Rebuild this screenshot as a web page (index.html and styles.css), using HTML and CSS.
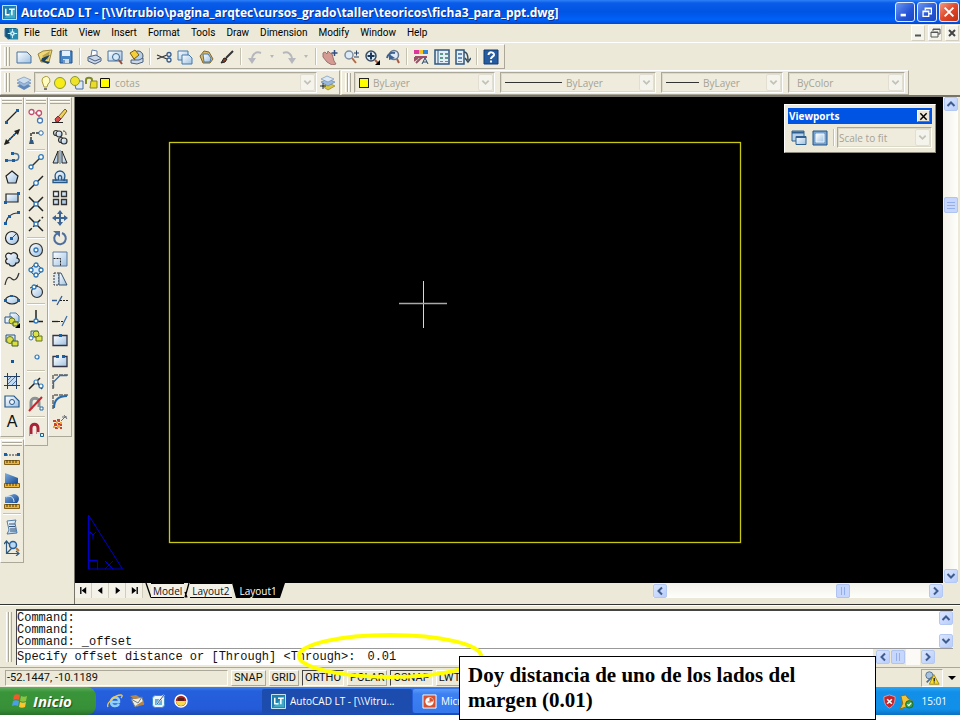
FILE: index.html
```
<!DOCTYPE html>
<html lang="en">
<head>
<meta charset="utf-8">
<title>AutoCAD LT - ficha3_para_ppt.dwg</title>
<link rel="stylesheet" href="styles.css">
</head>
<body>
<svg class="defs" aria-hidden="true">
  <defs>
    <linearGradient id="sheet" x1="0" y1="0" x2="1" y2="1"><stop offset="0" stop-color="#fff"/><stop offset="1" stop-color="#9cc0e2"/></linearGradient>
    <linearGradient id="steel" x1="0" y1="0" x2="1" y2="1"><stop offset="0" stop-color="#7fb0e0"/><stop offset="1" stop-color="#14448c"/></linearGradient>
  </defs>
  <symbol id="down" viewBox="0 0 10 10"><path d="M1.500 3L5 6.500L8.500 3" fill="none" stroke="currentColor" stroke-width="2"/></symbol>
  <symbol id="up" viewBox="0 0 10 10"><path d="M1.500 7L5 3.500L8.500 7" fill="none" stroke="currentColor" stroke-width="2"/></symbol>
  <symbol id="left" viewBox="0 0 10 10"><path d="M7 1.500L3.500 5L7 8.500" fill="none" stroke="currentColor" stroke-width="2"/></symbol>
  <symbol id="right" viewBox="0 0 10 10"><path d="M3 1.500L6.500 5L3 8.500" fill="none" stroke="currentColor" stroke-width="2"/></symbol>
  <symbol id="lt" viewBox="0 0 16 16"><path d="M.5 .5h15v15H.5z" fill="#1e7fae" stroke="#d8f0f8"/><path d="M2 14L14 2v12z" fill="#3fa9c8"/><path d="M4 4v6.500h4M7.500 4.500h6M10.500 4.500V11" fill="none" stroke="#fff" stroke-width="1.600"/></symbol>
</svg>

<header class="titlebar">
  <svg class="app-icon"><use href="#lt"/></svg>
  <h1>AutoCAD LT - [\\Vitrubio\pagina_arqtec\cursos_grado\taller\teoricos\ficha3_para_ppt.dwg]</h1>
  <div class="window-buttons">
    <button aria-label="Minimize"><svg viewBox="0 0 16 16"><path d="M3 11.500h6" stroke="#fff" stroke-width="3"/></svg></button>
    <button aria-label="Restore"><svg viewBox="0 0 16 16"><path d="M6 6V3.500h7V10h-2.500M3.500 7h6.500v6H3.500zM3 7.500h7M6 4h7" fill="none" stroke="#fff" stroke-width="1.500"/></svg></button>
    <button class="close" aria-label="Close"><svg viewBox="0 0 16 16"><path d="M3 3l10 10M13 3L3 13" stroke="#fff" stroke-width="2.200"/></svg></button>
  </div>
</header>

<nav class="menubar">
  <svg class="menu-logo" viewBox="0 0 16 16"><path d="M1 2h12l2 3v9H4l-3-3z" fill="#12567c"/><path d="M5 3h10v11H7z" fill="#258bb0"/><path d="M9 3v10M4 8h10" stroke="#d8f6ff"/><rect x="7.500" y="6.500" width="3" height="3" fill="#258bb0" stroke="#fff"/><path d="M1 3v8l4 3" fill="none" stroke="#4a7cb8"/></svg>
  <button>File</button><button>Edit</button><button>View</button><button>Insert</button><button>Format</button><button>Tools</button><button>Draw</button><button>Dimension</button><button>Modify</button><button>Window</button><button>Help</button>
  <div class="doc-buttons">
    <button aria-label="Minimize drawing"><svg viewBox="0 0 12 12"><path d="M3 8.500h6" stroke="#555" stroke-width="2"/></svg></button>
    <button aria-label="Restore drawing"><svg viewBox="0 0 12 12"><path d="M4 4V2h7v5H9M4 2.500h7M2 5h7v5H2zM2 5.500h7" fill="none" stroke="#555"/></svg></button>
    <button aria-label="Close drawing"><svg viewBox="0 0 12 12"><path d="M3 3l6 6M9 3L3 9" stroke="#444" stroke-width="2"/></svg></button>
  </div>
</nav>

<div class="dock-row">
  <div class="toolbar standard">
    <span class="grip"></span>
    <button aria-label="New"><svg viewBox="0 0 16 16"><path d="M1 3h10l4 4v7H1z" fill="url(#sheet)" stroke="#46719e"/></svg></button>
    <button aria-label="Open"><svg viewBox="0 0 16 16"><path d="M1 5l5-3 9-1-3 12H4z" fill="#f0d878" stroke="#9a8338"/><path d="M5 7l8-5-2 9z" fill="#b9a24e"/><path d="M5 9l8-3-5 6 5 1-2 2-7-3z" fill="#1c4260"/></svg></button>
    <button aria-label="Save"><svg viewBox="0 0 16 16"><path d="M2 2h12v12H2z" fill="#4b86c4" stroke="#244f8c"/><path d="M4 2h8v5H4z" fill="#e6f0fa"/><path d="M5 10h6v4H5z" fill="#c9dff0"/><path d="M6 11v3" stroke="#244f8c"/></svg></button>
    <span class="sep"></span>
    <button aria-label="Plot"><svg viewBox="0 0 16 16"><path d="M5 7L6 1l5 1v5" fill="#fff" stroke="#6080a8"/><path d="M2 8l8-2 5 3v3l-6 3-7-3z" fill="#cbd8e8" stroke="#4b5f80"/><path d="M3 9l6 3 5-2" fill="none" stroke="#4b5f80"/></svg></button>
    <button aria-label="Preview"><svg viewBox="0 0 16 16"><path d="M1 2h14v10H1z" fill="url(#sheet)" stroke="#46719e"/><circle cx="9" cy="8" r="3.500" fill="#d7eaf8" stroke="#36648f"/><path d="M12 11l3 4" stroke="#9b4d39" stroke-width="2"/></svg></button>
    <button aria-label="Publish"><svg viewBox="0 0 16 16"><circle cx="10" cy="7" r="5" fill="#b8cfe8" stroke="#456"/><path d="M2 4l5-3 4 5-5 4z" fill="#f4cf35" stroke="#7a5d10"/><path d="M3 11l8 0 4-2v4l-6 2-6-1z" fill="#ccd9e8" stroke="#4a5e7c"/></svg></button>
    <span class="sep"></span>
    <button aria-label="Cut"><svg viewBox="0 0 16 16"><path d="M1 6l10 4M1 10l10-4" stroke="#333" stroke-width="1.300"/><circle cx="13" cy="5.500" r="2" fill="none" stroke="#385f90" stroke-width="1.300"/><circle cx="13" cy="11" r="2" fill="none" stroke="#385f90" stroke-width="1.300"/></svg></button>
    <button aria-label="Copy"><svg viewBox="0 0 16 16"><path d="M1 2h10v9H1z" fill="url(#sheet)" stroke="#4579ac"/><path d="M5 6h7l3 3v6H5z" fill="url(#sheet)" stroke="#4579ac"/></svg></button>
    <button aria-label="Paste"><svg viewBox="0 0 16 16"><path d="M2 7l4-5 5 1 4 7-3 4H5z" fill="#d9b968" stroke="#806528"/><path d="M5 5h5l3 4-1 4H6z" fill="url(#sheet)" stroke="#4579ac"/></svg></button>
    <button aria-label="Match properties"><svg viewBox="0 0 16 16"><path d="M14 2L7 9" stroke="#333" stroke-width="2"/><path d="M2 14l3-5 3 1-2 3z" fill="#8b3c22" stroke="#222"/></svg></button>
    <span class="sep"></span>
    <button aria-label="Undo" disabled><svg viewBox="0 0 16 16"><path d="M14 4C9 2 5 5 5 11" fill="none" stroke="#b5b7bc" stroke-width="2"/><path d="M1 9h8l-4 6z" fill="#b5b7bc"/></svg></button>
    <button class="drop" aria-label="Undo list" disabled></button>
    <button aria-label="Redo" disabled><svg viewBox="0 0 16 16"><path d="M2 4c5-2 9 1 9 7" fill="none" stroke="#b5b7bc" stroke-width="2"/><path d="M7 9h8l-4 6z" fill="#b5b7bc"/></svg></button>
    <button class="drop" aria-label="Redo list" disabled></button>
    <span class="sep"></span>
    <button aria-label="Pan"><svg viewBox="0 0 16 16"><path d="M1 4l2-1 2 2 1-3 2 2 2 1 2 7 2 3-4 1-5-3-4-5z" fill="#d59b93" stroke="#9c7270"/><path d="M12.500 1v6M9.500 4h6" stroke="#314f7e" stroke-width="1.500"/></svg></button>
    <button aria-label="Zoom realtime"><svg viewBox="0 0 16 16"><circle cx="6" cy="6" r="4" fill="#dcebf6" stroke="#7d8da0" stroke-width="1.500"/><path d="M9 9l4 5" stroke="#b26a48" stroke-width="2"/><path d="M11 4h5M13.500 1.500v5M11 8h5" stroke="#273f60"/></svg></button>
    <button aria-label="Zoom window"><svg viewBox="0 0 16 16"><circle cx="7" cy="7" r="5" fill="#dcebf6" stroke="#3a4c61" stroke-width="1.500"/><path d="M7 3.500v7M3.500 7h7" stroke="#1c3858" stroke-width="2"/><path d="M11 11l3 3" stroke="#a55c45" stroke-width="2"/><path d="M16 11v5h-5z" fill="#000"/></svg></button>
    <button aria-label="Zoom previous"><svg viewBox="0 0 16 16"><circle cx="9" cy="6" r="4.500" fill="#dcebf6" stroke="#68788a" stroke-width="1.500"/><path d="M12 10l2 4" stroke="#a55c45" stroke-width="2"/><path d="M2 9c1-4 4-6 8-5" fill="none" stroke="#3c6292" stroke-width="2"/><path d="M4 5l6 4-6 2z" fill="#3c6292"/></svg></button>
    <span class="sep"></span>
    <button aria-label="Properties"><svg viewBox="0 0 16 16"><path d="M1 1h5v4H1z" fill="#e0359a"/><path d="M6 1h4v4H6z" fill="#f2c420"/><path d="M10 1h5v4h-5z" fill="#2d85d8"/><path d="M2 8h12M2 8v3l3-2M3 14l4-4 3-2" stroke="#994f68" stroke-width="2" fill="none"/><path d="M9 15l3-6 3 6M10 13h4" stroke="#27466c" fill="none"/></svg></button>
    <button aria-label="DesignCenter"><svg viewBox="0 0 16 16"><path d="M1 1h14v14H1z" fill="#e3eef8" stroke="#31577f" stroke-width="1.500"/><path d="M4 1v14" stroke="#31577f"/><path d="M6 4h3v2H6zM6 8h3v2H6zM6 12h3v1H6zM11 4h3v2h-3zM11 8h3v2h-3zM11 12h3v1h-3z" fill="#5e9a83"/></svg></button>
    <button aria-label="Tool palettes"><svg viewBox="0 0 16 16"><path d="M1 1h8v14H1z" fill="#e3eef8" stroke="#31577f" stroke-width="1.500"/><path d="M3 4h4v2H3zM3 8h4v2H3zM3 12h4v1H3z" fill="#648cc0"/><path d="M9 3c3 0 4 3 4 8M10 9l3 4 3-4" fill="none" stroke="#374c5c" stroke-width="1.500"/></svg></button>
    <span class="sep"></span>
    <button aria-label="Help"><svg viewBox="0 0 16 16"><path d="M1 1h14v14H1z" fill="#265da0" stroke="#123a72"/><path d="M5.500 6c0-4 6-3 5.500 0-.5 2-3 1.500-3 4M8 11.500v2" fill="none" stroke="#fff" stroke-width="2"/></svg></button>
  </div>
</div>

<div class="dock-row">
  <div class="toolbar layers">
    <span class="grip"></span>
    <button aria-label="Layer manager"><svg viewBox="0 0 16 16"><path d="M1 11l7-3 7 3-7 4z" fill="#6088b8"/><path d="M1 8l7-3 7 3-7 4z" fill="#9bb9dc" stroke="#537cae" stroke-width=".6"/><path d="M1 5l7-3 7 3-7 4z" fill="#cbdced" stroke="#6288b4" stroke-width=".6"/></svg></button>
    <div class="combo layer-combo">
      <svg class="layer-state" viewBox="0 0 72 16"><path d="M3 6a4 4 0 1 1 6 3l-1 3H5L4 9z" fill="#fffcc0" stroke="#ad9a3a"/><path d="M5 14h3" stroke="#777" stroke-width="2"/><circle cx="21" cy="8" r="5.500" fill="#f8ec18" stroke="#8a9632"/><path d="M35 6h9v8h-7z" fill="#dce8f4" stroke="#4a6ea0"/><circle cx="36" cy="6" r="4.500" fill="#eee22a" stroke="#8b9834"/><path d="M47 9V5c0-3 6-3 6 0v5" fill="none" stroke="#7f8a20" stroke-width="2"/><path d="M52 6h6v7h-7z" fill="#e8dd28" stroke="#8a8520"/><path d="M61.500 3.500h9v9h-9z" fill="#ff0" stroke="#111"/></svg>
      <select aria-label="Layer" disabled><option>cotas</option></select>
      <svg class="arrow"><use href="#down"/></svg>
    </div>
    <button aria-label="Layer previous"><svg viewBox="0 0 16 16"><path d="M2 11l7-3 6 3-7 4z" fill="#d8c63b" stroke="#7e7725" stroke-width=".6"/><path d="M1 7l7-3 7 3-7 4z" fill="#9bb9dc" stroke="#537cae" stroke-width=".6"/><path d="M1 4l6-3 7 3-6 3z" fill="#dce8f4" stroke="#6288b4" stroke-width=".6"/><path d="M0 11h6M3 8v6" stroke="#234"/></svg></button>
  </div>
  <div class="toolbar props">
    <span class="grip"></span>
    <div class="combo color-combo"><span class="swatch"></span><select aria-label="Color" disabled><option>ByLayer</option></select><svg class="arrow"><use href="#down"/></svg></div>
    <div class="combo type-combo"><span class="line long"></span><select aria-label="Linetype" disabled><option>ByLayer</option></select><svg class="arrow"><use href="#down"/></svg></div>
    <div class="combo weight-combo"><span class="line"></span><select aria-label="Lineweight" disabled><option>ByLayer</option></select><svg class="arrow"><use href="#down"/></svg></div>
    <div class="combo plot-combo"><select aria-label="Plot style" disabled><option>ByColor</option></select><svg class="arrow"><use href="#down"/></svg></div>
  </div>
</div>

<main class="workspace">
  <aside class="side">
    <div class="side-stack">
      <div class="palette draw">
        <span class="hgrip"></span>
        <button aria-label="Line"><svg viewBox="0 0 16 16"><path d="M2 14L14 2" stroke="#222" stroke-width="1.300"/><path d="M1 13h3v3H1zM12 1h3v3h-3z" fill="#1760a8"/></svg></button>
        <button aria-label="Construction line"><svg viewBox="0 0 16 16"><path d="M1 15L15 1" stroke="#222" stroke-width="1.500"/><path d="M0 16l2-6 4 4zM16 0l-6 2 4 4z" fill="#222"/><path d="M5 9h2v2H5zM9 5h2v2H9z" fill="#1760a8"/></svg></button>
        <button aria-label="Polyline"><svg viewBox="0 0 16 16"><path d="M9 4.500h2c5 0 5 7 0 7H2" fill="none" stroke="#49739d" stroke-width="1.500"/><path d="M1 10h3v3H1zM8 10h3v3H8zM7 3h3v3H7z" fill="#1760a8"/></svg></button>
        <button aria-label="Polygon"><svg viewBox="0 0 16 16"><path d="M8 2l6 5-2 7H4L2 7z" fill="url(#sheet)" stroke="#222" stroke-width="1.200"/></svg></button>
        <button aria-label="Rectangle"><svg viewBox="0 0 16 16"><path d="M2 4h12v8H2z" fill="url(#sheet)" stroke="#222" stroke-width="1.200"/><path d="M0 11h3v3H0zM13 2h3v3h-3z" fill="#1760a8"/></svg></button>
        <button aria-label="Arc"><svg viewBox="0 0 16 16"><path d="M2 14C2 8 7 3 14 3" fill="none" stroke="#333" stroke-width="1.200"/><path d="M0 12h3v3H0zM4 5h3v3H4zM13 1h3v3h-3z" fill="#1760a8"/></svg></button>
        <button aria-label="Circle"><svg viewBox="0 0 16 16"><circle cx="8" cy="8" r="6.500" fill="url(#sheet)" stroke="#222" stroke-width="1.200"/><path d="M8 8l4-4" stroke="#1760a8"/><path d="M6 7h3v3H6z" fill="#1760a8"/></svg></button>
        <button aria-label="Revision cloud"><svg viewBox="0 0 16 16"><path d="M3 8C0 5 3 0 7 3c3-3 8 0 6 4 4 1 2 6-1 5-1 4-6 4-7 1-4 0-4-4-2-5z" fill="url(#sheet)" stroke="#222" stroke-width="1.200"/></svg></button>
        <button aria-label="Spline"><svg viewBox="0 0 16 16"><path d="M1 14c2-10 5-8 7-6s5 1 7-6" fill="none" stroke="#333" stroke-width="1.200"/></svg></button>
        <button aria-label="Ellipse"><svg viewBox="0 0 16 16"><ellipse cx="8" cy="8" rx="6.500" ry="4" fill="url(#sheet)" stroke="#222" stroke-width="1.200"/><path d="M0 7h3v3H0zM13 7h3v3h-3zM6 3h3v2H6z" fill="#1760a8"/></svg></button>
        <button aria-label="Insert block"><svg viewBox="0 0 16 16"><path d="M6 1h6l3 3v6H6z" fill="url(#sheet)" stroke="#4579ac"/><path d="M1 5h7v6H1z" fill="#e9f2fb" stroke="#27558a"/><circle cx="8" cy="9" r="3" fill="#d9dc3c" stroke="#66751c"/><path d="M9 10h5v4H9z" fill="#dadd44" stroke="#435f20"/><path d="M16 11v5h-5z"/></svg></button>
        <button aria-label="Make block"><svg viewBox="0 0 16 16"><path d="M2 3h9v7H2z" fill="#d8e9f8" stroke="#27558a"/><circle cx="6" cy="8" r="3.500" fill="#dadd44" stroke="#66751c"/><path d="M8 9h6v5H8z" fill="#dadd44" stroke="#435f20"/></svg></button>
        <button aria-label="Point"><svg viewBox="0 0 16 16"><path d="M7 7h3v3H7z" fill="#14569a"/></svg></button>
        <button aria-label="Hatch"><svg viewBox="0 0 16 16"><path d="M3 3h10v10H3z" fill="#c3daf0"/><path d="M3 8l5-5M3 12l9-9M7 13l6-6M11 13l2-2" stroke="#4d7bae"/><path d="M3.500 0v16M12.500 0v16M0 3.500h16M0 12.500h16" stroke="#223f63"/></svg></button>
        <button aria-label="Region"><svg viewBox="0 0 16 16"><path d="M1 3h9l5 5v6H1z" fill="url(#sheet)" stroke="#26588a" stroke-width="1.200"/><circle cx="8" cy="9" r="2.500" fill="#eef4f8" stroke="#26588a"/></svg></button>
        <button class="letter" aria-label="Multiline text">A</button>
      </div>
      <div class="palette inquiry">
        <span class="hgrip"></span>
        <button aria-label="Distance"><svg viewBox="0 0 16 16"><path d="M2 4h12" stroke="#333" stroke-dasharray="2 1"/><path d="M0 2h3v3H0zM13 2h3v3h-3z" fill="#1760a8"/><path d="M.5 9.500h15v4H.5z" fill="#eab53c" stroke="#856019"/><path d="M3 9v3M6 9v3M9 9v3M12 9v3" stroke="#4a3710"/></svg></button>
        <button aria-label="Area"><svg viewBox="0 0 16 16"><path d="M1 1l13 5v6H1z" fill="url(#steel)"/><path d="M.5 11.500h15v4H.5z" fill="#eab53c" stroke="#856019"/><path d="M3 11v3M6 11v3M9 11v3M12 11v3" stroke="#4a3710"/></svg></button>
        <button aria-label="Mass properties"><svg viewBox="0 0 16 16"><path d="M1 4l9-3c6 1 6 6 3 9H1z" fill="url(#steel)"/><path d="M2 4c4-2 8 0 8 5" fill="none" stroke="#d6e8fa"/><path d="M.5 11.500h15v4H.5z" fill="#eab53c" stroke="#856019"/><path d="M3 11v3M6 11v3M9 11v3M12 11v3" stroke="#4a3710"/></svg></button>
        <span class="hsep"></span>
        <button aria-label="List"><svg viewBox="0 0 16 16"><path d="M3 2l9-1-1 3 2 10-10 1 2-4z" fill="url(#sheet)" stroke="#527ba8"/><path d="M5 5h6M5 7.500h6M6 10h6M6 12h6" stroke="#37567b"/></svg></button>
        <button aria-label="Locate point"><svg viewBox="0 0 16 16"><path d="M2.500 1v12.500H15M0 4l2.500-3L5 4M12 11l3 2.500-3 2.500M3 13l5-5" fill="none" stroke="#31587d" stroke-width="1.200"/><circle cx="9" cy="5" r="3.500" fill="#b9d9f2" stroke="#285d9b" stroke-width="1.500"/><path d="M12 8l3 3" stroke="#bd7a34" stroke-width="2"/></svg></button>
      </div>
    </div>
    <div class="palette snap">
      <span class="hgrip"></span>
      <button aria-label="Temporary track"><svg viewBox="0 0 16 16"><path d="M4 5h7v7" fill="none" stroke="#cb5561" stroke-width="1.500" stroke-dasharray="2 1"/><g fill="#fff" stroke="#c34f70" stroke-width="1.300"><circle cx="3.500" cy="4" r="2.500"/><circle cx="11" cy="5" r="2.500"/><circle cx="12" cy="12.500" r="2.500" stroke="#4779b5"/></g></svg></button>
      <button aria-label="Snap from"><svg viewBox="0 0 16 16"><path d="M3 11V4h9" fill="none" stroke="#333" stroke-width="1.500" stroke-dasharray="3 1"/><circle cx="13" cy="4" r="2.200" fill="#fff" stroke="#296aa8"/><path d="M1 15l1-4h3l1 4z" fill="#31587d"/></svg></button>
      <span class="hsep"></span>
      <button aria-label="Endpoint"><svg viewBox="0 0 16 16"><path d="M3 13L13 3" stroke="#333" stroke-width="1.500"/><g fill="#fff" stroke="#2f78b8" stroke-width="1.300"><circle cx="3" cy="13" r="2"/><circle cx="13" cy="3" r="2.300"/></g></svg></button>
      <button aria-label="Midpoint"><svg viewBox="0 0 16 16"><path d="M1 15L15 1" stroke="#222" stroke-width="1.500"/><circle cx="8" cy="8" r="2.300" fill="#fff" stroke="#2f78b8" stroke-width="1.300"/></svg></button>
      <button aria-label="Intersection"><svg viewBox="0 0 16 16"><path d="M1 15L15 1M1 1l14 14" stroke="#222" stroke-width="1.500"/><circle cx="8" cy="8" r="2" fill="#fff" stroke="#2f78b8" stroke-width="1.300"/></svg></button>
      <button aria-label="Apparent intersection"><svg viewBox="0 0 16 16"><path d="M1 1l14 14" stroke="#222" stroke-width="1.500"/><path d="M1 15L15 1" stroke="#222" stroke-width="1.500" stroke-dasharray="4 2"/><circle cx="8" cy="8" r="2" fill="#fff" stroke="#2f78b8" stroke-width="1.300"/></svg></button>
      <span class="hsep"></span>
      <button aria-label="Center"><svg viewBox="0 0 16 16"><circle cx="8" cy="8" r="6.500" fill="url(#sheet)" stroke="#333" stroke-width="1.200"/><circle cx="8" cy="8" r="2" fill="#fff" stroke="#2f78b8" stroke-width="1.300"/></svg></button>
      <button aria-label="Quadrant"><svg viewBox="0 0 16 16"><circle cx="8" cy="8" r="5" fill="#d8e9f8" stroke="#333"/><g fill="#fff" stroke="#2f78b8" stroke-width="1.300"><circle cx="8" cy="3" r="2"/><circle cx="8" cy="13" r="2"/><circle cx="3" cy="8" r="2"/><circle cx="13" cy="8" r="2"/></g></svg></button>
      <button aria-label="Tangent"><svg viewBox="0 0 16 16"><circle cx="9" cy="9" r="5.500" fill="url(#sheet)" stroke="#333" stroke-width="1.200"/><path d="M2 5l8-3" stroke="#333"/><circle cx="6" cy="4" r="2" fill="#fff" stroke="#2f78b8" stroke-width="1.300"/></svg></button>
      <span class="hsep"></span>
      <button aria-label="Perpendicular"><svg viewBox="0 0 16 16"><path d="M8 1v11M1 12.500h14" stroke="#222" stroke-width="1.500"/><circle cx="8" cy="12" r="2" fill="#fff" stroke="#2f78b8" stroke-width="1.300"/></svg></button>
      <button aria-label="Insert snap"><svg viewBox="0 0 16 16"><path d="M3 2h7v6H3z" fill="#c9dce9" stroke="#446d49"/><path d="M8 7h6v5H8z" fill="#e4e646" stroke="#60702a"/><circle cx="8" cy="5" r="3" fill="#dce34b" stroke="#66751c"/><circle cx="3" cy="9" r="2" fill="#fff" stroke="#2f78b8"/></svg></button>
      <button aria-label="Node"><svg viewBox="0 0 16 16"><circle cx="9" cy="7" r="2" fill="#eef6fc" stroke="#2f78b8" stroke-width="1.200"/></svg></button>
      <span class="hsep"></span>
      <button aria-label="Nearest"><svg viewBox="0 0 16 16"><path d="M1 14L12 3M9 7l5 7" stroke="#222" stroke-width="1.500"/><g fill="#fff" stroke="#2f78b8" stroke-width="1.200"><circle cx="8" cy="7" r="2"/><circle cx="13" cy="11" r="2"/></g></svg></button>
      <button aria-label="No snap"><svg viewBox="0 0 16 16"><path d="M3 13V6c0-5 8-5 8 0v5" fill="none" stroke="#8a9293" stroke-width="3"/><path d="M1 15L14 1" stroke="#c5252d" stroke-width="2"/><path d="M12 11h3v3h-3z" fill="#fff" stroke="#2f6898"/></svg></button>
      <span class="hsep"></span>
      <button aria-label="Snap settings"><svg viewBox="0 0 16 16"><path d="M3 14V6c0-5 7-5 7 0v6" fill="none" stroke="#a92336" stroke-width="3"/><path d="M2 13h3M9 11h3" stroke="#ddd" stroke-width="2"/><path d="M12.500 11.500h3v3h-3z" fill="#dff0fc" stroke="#185f91"/></svg></button>
    </div>
    <div class="palette modify">
      <span class="hgrip"></span>
      <button aria-label="Erase"><svg viewBox="0 0 16 16"><path d="M6 9l7-8 2 2-6 8z" fill="#f2d354" stroke="#75602a"/><path d="M3 11l3-3 3 3-3 3H4z" fill="#d74a4c" stroke="#7d2e33"/><path d="M0 14.500h11" stroke="#222"/></svg></button>
      <button aria-label="Copy object"><svg viewBox="0 0 16 16"><g fill="url(#sheet)" stroke="#333" stroke-width="1.200"><circle cx="4" cy="4" r="2.500"/><circle cx="7" cy="5" r="3"/><circle cx="9" cy="11" r="2.500"/><circle cx="12" cy="12" r="3"/></g><path d="M11 2c3 0 3 2 3 4" fill="none" stroke="#333"/></svg></button>
      <button aria-label="Mirror"><svg viewBox="0 0 16 16"><path d="M6 2v12H1z" fill="url(#sheet)" stroke="#222"/><path d="M10 2v12h5z" fill="url(#sheet)" stroke="#222"/><path d="M8 1v14" stroke="#49739d"/></svg></button>
      <button aria-label="Offset"><svg viewBox="0 0 16 16"><path d="M1 13.500V11h3c-5-12 13-12 8 0h3v2.500z" fill="url(#sheet)" stroke="#285887" stroke-width="1.300"/><path d="M3 11h4c-3-6 5-6 2 0h4" fill="none" stroke="#285887" stroke-width="1.300"/></svg></button>
      <button aria-label="Array"><svg viewBox="0 0 16 16"><path d="M1.500 1.500h5v5h-5zM9.500 1.500h5v5h-5zM1.500 9.500h5v5h-5zM9.500 9.500h5v5h-5z" fill="url(#sheet)" stroke="#333" stroke-width="1.300"/></svg></button>
      <button aria-label="Move"><svg viewBox="0 0 16 16"><path d="M8 2v12M2 8h12" stroke="#3c6496" stroke-width="2"/><path d="M8 0l3 4H5zM8 16l3-4H5zM0 8l4-3v6zM16 8l-4-3v6z" fill="#3c6496"/></svg></button>
      <button aria-label="Rotate"><svg viewBox="0 0 16 16"><path d="M5 3.500A5.800 5.800 0 1 0 10 3" fill="none" stroke="#4f6f9c" stroke-width="2"/><path d="M1 1h7v6z" fill="#4f6f9c"/></svg></button>
      <button aria-label="Scale"><svg viewBox="0 0 16 16"><path d="M1 1h14v14H1z" fill="url(#sheet)" stroke="#58799d"/><path d="M1.500 7.500h7v7" fill="none" stroke="#222" stroke-dasharray="2 1"/></svg></button>
      <button aria-label="Stretch"><svg viewBox="0 0 16 16"><path d="M2 2h5v12H2z" fill="#dbe9f5" stroke="#333" stroke-dasharray="2 1"/><path d="M7 2h2l6 12H7z" fill="url(#sheet)" stroke="#38536f"/></svg></button>
      <button aria-label="Trim"><svg viewBox="0 0 16 16"><path d="M0 8.500h5M5 13l5-9" stroke="#315e93" stroke-width="1.300"/><path d="M8 8.500h8" stroke="#222" stroke-dasharray="2 1"/></svg></button>
      <button aria-label="Extend"><svg viewBox="0 0 16 16"><path d="M0 9.500h6" stroke="#222" stroke-width="1.300"/><path d="M6 9.500h5" stroke="#222" stroke-dasharray="2 1"/><path d="M10 14l5-10" stroke="#3a6da8" stroke-width="1.300"/></svg></button>
      <button aria-label="Break at point"><svg viewBox="0 0 16 16"><path d="M1 3.500h14v10H1z" fill="url(#sheet)" stroke="#334" stroke-width="1.300"/><path d="M7 2h3v3H7z" fill="#1760a8"/></svg></button>
      <button aria-label="Break"><svg viewBox="0 0 16 16"><path d="M1 4h14v10H1z" fill="url(#sheet)"/><path d="M5 3.500H1v10h14v-10h-4" fill="none" stroke="#334" stroke-width="1.300"/><path d="M4 2h3v3H4zM10 2h3v3h-3z" fill="#1760a8"/></svg></button>
      <button aria-label="Chamfer"><svg viewBox="0 0 16 16"><path d="M1 16V2h15" fill="none" stroke="#222" stroke-dasharray="4 1"/><path d="M1.500 15V9L8 2.500h7" fill="none" stroke="#3b6a9d" stroke-width="1.300"/></svg></button>
      <button aria-label="Fillet"><svg viewBox="0 0 16 16"><path d="M1 16V2h15" fill="none" stroke="#222" stroke-dasharray="4 1"/><path d="M2 15C2 7 6 3 15 3" fill="none" stroke="#276aaa" stroke-width="2"/></svg></button>
      <button aria-label="Explode"><svg viewBox="0 0 16 16"><path d="M1 6h3v2H1zM5 5h3v3H5zM2 9h3v3H2zM6 9h4v3H6zM3 13h3v2H3zM8 13h2v2H8z" fill="#c9422d"/><path d="M4 7h2v3H4zM8 8h2v2H8zM5 11h3v3H5zM1 12h2v2H1z" fill="#f2a52f"/><path d="M9 7l5-5M12 1l3 4M10 3h5" stroke="#68717f"/></svg></button>
    </div>
  </aside>

  <section class="drawing">
    <div class="view">
      <svg class="sheet" viewBox="0 0 868 486" preserveAspectRatio="xMinYMin meet">
        <rect x="94.500" y="45.500" width="571" height="400" fill="none" stroke="#c8c814" stroke-width="1.300"/>
        <path d="M348.500 184v47" stroke="#d8d8d8"/><path d="M324 206.500h48" stroke="#a8a8a8" stroke-width="1.500"/>
        <g fill="none" stroke="#0000c8"><path d="M13.500 418v54h34zM13.500 463.500h9v9M30 464l8 8M38 464l-8 8M15 435l3 3 3-3M18 438v4"/></g>
      </svg>
      <div class="viewports" role="dialog" aria-label="Viewports">
        <div class="vp-title"><h2>Viewports</h2><button aria-label="Close viewports"><svg viewBox="0 0 10 10"><path d="M1.500 1.500l7 7M8.500 1.500l-7 7" stroke="#000" stroke-width="1.600"/></svg></button></div>
        <div class="vp-body">
          <button aria-label="Display viewports"><svg viewBox="0 0 16 16"><path d="M1 1h12v10H1z" fill="#b9d2ea" stroke="#2f6090"/><path d="M1 2.500h12" stroke="#2f6090" stroke-width="2"/><path d="M5 6.500h10v8H5z" fill="url(#sheet)" stroke="#2f6090"/><path d="M5 7h10" stroke="#2f6090" stroke-width="2"/></svg></button>
          <button aria-label="Single viewport"><svg viewBox="0 0 16 16"><path d="M1 1h14v14H1z" fill="#78a3cf" stroke="#24558c"/><path d="M4 4h8v8H4z" fill="url(#sheet)" stroke="#eef6fc"/></svg></button>
          <span class="sep"></span>
          <div class="combo"><select aria-label="Viewport scale" disabled><option>Scale to fit</option></select><svg class="arrow"><use href="#down"/></svg></div>
        </div>
      </div>
    </div>
    <div class="vscroll"><button aria-label="Scroll up"><svg><use href="#up"/></svg></button><span class="space-a"></span><span class="thumb"></span><span class="space-b"></span><button aria-label="Scroll down"><svg><use href="#down"/></svg></button></div>
    <div class="tabs">
      <div class="tab-nav">
        <button aria-label="First"><svg viewBox="0 0 10 10"><path d="M2 1v8" stroke="#000" stroke-width="1.500"/><path d="M8 1v8L3 5z"/></svg></button>
        <button aria-label="Previous"><svg viewBox="0 0 10 10"><path d="M7 1v8L2 5z"/></svg></button>
        <button aria-label="Next"><svg viewBox="0 0 10 10"><path d="M3 1v8l5-4z"/></svg></button>
        <button aria-label="Last"><svg viewBox="0 0 10 10"><path d="M8 1v8" stroke="#000" stroke-width="1.500"/><path d="M2 1v8l5-4z"/></svg></button>
      </div>
      <svg class="slant" viewBox="0 0 6 15"><path d="M1 0l4 14.500h1V0z" fill="#ece9d8"/><path d="M1 0l5 14.500" stroke="#000" stroke-width="1.300"/></svg>
      <button class="tab">Model</button>
      <svg class="slant" viewBox="0 0 6 15"><path d="M5 0L1 14.500M1 9l2 5.500" fill="none" stroke="#000" stroke-width="1.300"/></svg>
      <button class="tab">Layout2</button>
      <svg class="slant" viewBox="0 0 6 15"><path d="M0 0h6v15H4z" fill="#000"/></svg>
      <button class="tab active">Layout1</button>
      <svg class="slant" viewBox="0 0 6 15"><path d="M0 0h6L1 15H0z" fill="#000"/></svg>
      <div class="hscroll"><button aria-label="Scroll left"><svg><use href="#left"/></svg></button><span class="space-a"></span><span class="thumb"></span><span class="space-b"></span><button aria-label="Scroll right"><svg><use href="#right"/></svg></button></div>
    </div>
  </section>
</main>

<section class="command">
  <span class="grip"></span>
  <div class="console">
    <div class="history">
      <div class="log"><p>Command:</p><p>Command:</p><p>Command: _offset</p></div>
      <div class="log-scroll"><button aria-label="History up"><svg><use href="#up"/></svg></button><button aria-label="History down"><svg><use href="#down"/></svg></button></div>
    </div>
    <div class="prompt">
      <label for="cmd">Specify offset distance or [Through] &lt;Through&gt;:</label>
      <input id="cmd" value="0.01">
      <div class="hscroll small"><button aria-label="Command left"><svg><use href="#left"/></svg></button><span class="thumb"></span><span class="space-b"></span><button aria-label="Command right"><svg><use href="#right"/></svg></button></div>
    </div>
  </div>
</section>

<div class="statusbar">
  <span class="coords">-52.1447, -10.1189</span>
  <button>SNAP</button><button>GRID</button><button class="on">ORTHO</button><button>POLAR</button><button class="on">OSNAP</button><button>LWT</button><button class="on" aria-label="Model space"></button>
  <div class="status-tray">
    <svg viewBox="0 0 18 16"><circle cx="6" cy="5" r="4" fill="#a9c3df" stroke="#506f92"/><path d="M3 13l6-6" stroke="#506f92" stroke-width="2"/><path d="M11 4l6 11H6z" fill="#f7dc28" stroke="#9a8312"/><path d="M11.500 8v4M11.500 13v1" stroke="#222" stroke-width="1.500"/></svg>
  </div>
  <button class="drop dark" aria-label="Status menu"></button>
</div>

<footer class="taskbar">
  <button class="start"><svg viewBox="0 0 16 16"><path d="M2 2c2-1 4-1 6 0L7 7C5 6 3 6 1 7z" fill="#f0592a"/><path d="M9 3c2 1 4 1 6 0l-1 5c-2 1-4 1-6 0z" fill="#8bc53f"/><path d="M1 8c2-1 4-1 6 0l-1 5c-2-1-4-1-6 0z" fill="#4aa0e8"/><path d="M8 9c2 1 4 1 6 0l-1 5c-2 1-4 1-6 0z" fill="#fcc52c"/></svg>Inicio</button>
  <div class="quick">
    <button aria-label="Internet Explorer"><svg viewBox="0 0 16 16"><path d="M4 9h8c1-6-8-6-8 0 0 5 6 5 8 2" fill="none" stroke="#8fd0ff" stroke-width="2.500"/><path d="M1 14C-1 11 7 2 14 2c2 0 1 2 0 3" fill="none" stroke="#f6c946" stroke-width="1.300"/></svg></button>
    <button aria-label="Mail"><svg viewBox="0 0 16 16"><path d="M2 6l11-2 2 7-9 3z" fill="#f3efe0" stroke="#66798e"/><path d="M2 6l7 4 4-6" fill="none" stroke="#66798e"/><path d="M1 3l6-1 5 3-7 1zM6 13l8-5 1 4z" fill="#b78545"/></svg></button>
    <button aria-label="Show desktop"><svg viewBox="0 0 16 16"><rect x="1.500" y="2.500" width="12" height="12" rx="3" fill="#edf5fc" stroke="#3c8acb"/><path d="M4 6h7v6H4z" fill="#65afe0"/><path d="M6 11l7-9" stroke="#fff" stroke-width="2"/><path d="M6 11l7-9" stroke="#456"/></svg></button>
    <button aria-label="Media"><svg viewBox="0 0 16 16"><circle cx="8" cy="8" r="6" fill="#a82520" stroke="#fff" stroke-width="1.500"/><path d="M3 8a5 5 0 0 0 10 0z" fill="#f7d94a"/><path d="M5 5h6v3H5z" fill="#5a1b1c"/></svg></button>
  </div>
  <button class="task current"><svg><use href="#lt"/></svg>AutoCAD LT - [\\Vitru...</button>
  <button class="task"><svg viewBox="0 0 16 16"><path d="M1 1h14v14H1z" fill="#d7522e" stroke="#fff"/><circle cx="8" cy="8" r="4.500" fill="#fff"/><path d="M8 8V4a4 4 0 0 1 4 4z" fill="#d7522e"/><path d="M6 8h4v1H6z" fill="#d7522e"/></svg>Micr</button>
  <div class="tray">
    <svg viewBox="0 0 16 16"><path d="M8 1l6 2c0 7-2 10-6 12C4 13 2 10 2 3z" fill="#c5262e" stroke="#d8a0a8"/><path d="M5.500 5.500l5 5M10.500 5.500l-5 5" stroke="#fff" stroke-width="1.600"/></svg>
    <svg viewBox="0 0 16 16"><path d="M2 2l5-1 3 4 4 2-2 6-5 1-6 2 3-6z" fill="#f3c437" stroke="#926d11"/><circle cx="11" cy="11" r="4" fill="#38a24a" stroke="#1e6a2c"/><path d="M9 11l1.500 1.500L13 9.500" fill="none" stroke="#fff" stroke-width="1.300"/></svg>
    <time>15:01</time>
  </div>
</footer>

<svg class="highlight" viewBox="0 0 186 46" aria-hidden="true"><ellipse cx="93" cy="23" rx="91" ry="21" fill="none" stroke="#ff0" stroke-width="4"/></svg>
<p class="caption">Doy distancia de uno de los lados del margen (0.01)</p>
</body>
</html>
```
FILE: styles.css
```
* { box-sizing: border-box; }

body {
  --face: #ece9d8;
  --shade: #aca899;
  display: flex;
  flex-direction: column;
  position: relative;
  min-height: 100vh;
  margin: 0;
  padding-bottom: 5px;
  background: #fff;
  font: 10px/14px "Open Sans", "Noto Sans", sans-serif;
  color: #111;
}

h1, h2, p { margin: 0; font: inherit; }
button, select, input { margin: 0; padding: 0; border: 0; background: none; font: inherit; color: inherit; }
button { display: flex; align-items: center; justify-content: center; }
svg { display: block; flex: none; width: 16px; height: 16px; }
.defs { position: absolute; width: 0; height: 0; }

/* Title bar */
.titlebar {
  display: flex;
  align-items: center;
  gap: 4px;
  height: 24px;
  padding: 0 1px 0 2px;
  background: linear-gradient(#2f80f8 0, #0a5ce8 3px, #0054e3 12px, #0062fa 20px, #0048d0);
  color: #fff;
}
.titlebar h1 {
  flex: 1;
  overflow: hidden;
  white-space: nowrap;
  padding-top: 2px;
  font: bold 12px/20px "Open Sans", sans-serif;
  text-shadow: 1px 1px 0 #0a2f90;
}
.titlebar .app-icon { width: 15px; height: 15px; }
.window-buttons { display: flex; gap: 2px; }
.window-buttons button {
  width: 20px;
  height: 20px;
  border: 1px solid #e4ecfc;
  border-radius: 3px;
  background: linear-gradient(135deg, #6c96f0, #2455d8 60%, #1b47c0);
}
.window-buttons svg { width: 14px; height: 14px; }
.window-buttons .close { background: linear-gradient(135deg, #f09a80, #e0482a 50%, #c03010); }

/* Menu bar */
.menubar {
  display: flex;
  align-items: center;
  gap: 11px;
  height: 19px;
  padding-left: 4px;
  border-bottom: 1px solid #fff;
  background: var(--face);
  font-family: Roboto, sans-serif;
  color: #000;
}
.menu-logo { width: 15px; height: 15px; margin-right: -6px; }
.doc-buttons { display: flex; gap: 3px; margin-left: auto; padding-right: 1px; }
.doc-buttons button { width: 14px; height: 16px; border: 1px solid; border-color: #fff #d2cfbf #d2cfbf #fff; background: #f4f3ec; }
.doc-buttons svg { width: 12px; height: 12px; }

/* Docked toolbars */
.dock-row { display: flex; gap: 1px; padding-top: 1px; background: var(--face); }
.toolbar {
  display: flex;
  align-items: center;
  height: 25px;
  padding: 0 3px;
  border: 1px solid;
  border-color: #fff var(--shade) var(--shade) #fff;
  background: #efecde;
}
.dock-row + .dock-row { border-bottom: 2px solid #77756a; }
.grip {
  align-self: stretch;
  width: 6px;
  margin: 2px 3px 2px 0;
  border: 1px solid;
  border-color: #fff var(--shade) var(--shade) #fff;
  border-width: 0 1px;
  background: linear-gradient(90deg, transparent 1px, var(--shade) 1px 2px, #fff 2px 3px, transparent 3px);
}
.toolbar > button { width: 21px; height: 21px; }
.sep { width: 7px; height: 17px; background: linear-gradient(90deg, transparent 3px, #c5c2b2 3px 4px, #fff 4px 5px, transparent 5px); }
.toolbar > .drop { width: 13px; }
.drop::before { content: ""; border: 2px solid transparent; border-top: 3px solid #b5b7bc; border-bottom: 0; }
.drop.dark::before { border: 4px solid transparent; border-top-color: #000; border-bottom: 0; }

.combo {
  display: flex;
  align-items: center;
  height: 21px;
  border: 1px solid;
  border-color: var(--shade) #fff #fff var(--shade);
  outline: 1px solid #dcd9c8;
  outline-offset: -2px;
  background: #efecde;
}
.combo select { flex: 1; min-width: 0; appearance: none; opacity: 1; padding-left: 4px; color: #a5a295; }
.combo .arrow {
  width: 15px;
  height: 17px;
  margin-right: 1px;
  padding: 3px 2px;
  border: 1px solid #e2dfd2;
  border-radius: 2px;
  background: #f5f4ec;
  color: #c3c2b8;
}
.layers { width: 340px; padding-right: 1px; }
.layer-combo { flex: 1; }
.layer-state { width: 72px; margin-left: 4px; }
.props { width: 568px; }
.props .combo + .combo { margin-left: 5px; }
.color-combo { width: 141px; }
.type-combo { width: 156px; }
.weight-combo { width: 122px; }
.plot-combo { flex: 1; }
.plot-combo select { padding-left: 8px; }
.swatch { width: 10px; height: 10px; margin-left: 4px; border: 1px solid #222; background: #ff0; }
.line { width: 33px; margin-left: 4px; border-top: 1px solid #333; }
.line.long { width: 57px; }

/* Workspace */
.workspace { display: flex; flex: 1; background: var(--face); }
.side { display: flex; align-items: flex-start; width: 75px; border-right: 1px solid #77756a; }
.side-stack { display: flex; flex-direction: column; gap: 2px; }
.palette {
  display: flex;
  flex-direction: column;
  align-items: center;
  width: 24px;
  border: 1px solid;
  border-color: #fff var(--shade) var(--shade) #fff;
  background: #efecde;
}
.palette button { flex: 1; }
.draw, .modify { height: 340px; padding-bottom: 4px; }
.snap { height: 349px; padding-bottom: 5px; }
.inquiry { height: 124px; padding-bottom: 4px; }
.hgrip {
  width: 20px;
  height: 6px;
  margin: 0 0 2px;
  border: 1px solid;
  border-color: #fff transparent var(--shade);
  border-width: 1px 0;
  background: linear-gradient(transparent 1px, var(--shade) 1px 2px, #fff 2px 3px, transparent 3px);
}
.hsep { width: 18px; height: 5px; background: linear-gradient(transparent 2px, #c5c2b2 2px 3px, #fff 3px 4px, transparent 4px); }
.letter { font: 16px/16px "Liberation Sans", sans-serif; }

.drawing { display: grid; flex: 1; grid-template: 1fr 21px / 1fr 17px; min-width: 0; }
.view { position: relative; background: #000; }
.sheet { width: 100%; height: 100%; }
.viewports {
  position: absolute;
  top: 7px;
  right: 7px;
  width: 152px;
  padding: 3px;
  border: 1px solid;
  border-color: #fff #8c897c #8c897c #fff;
  background: var(--face);
}
.vp-title { display: flex; align-items: center; justify-content: space-between; height: 16px; padding: 0 2px 0 1px; background: #0054e3; color: #fff; }
.vp-title h2 { font: bold 10px/14px "Open Sans", sans-serif; }
.vp-title button { width: 13px; height: 12px; border: 1px solid; border-color: #fff #777 #777 #fff; background: var(--face); }
.vp-title svg { width: 9px; height: 9px; }
.vp-body { display: flex; align-items: center; height: 25px; padding-top: 2px; }
.vp-body > button { width: 21px; height: 21px; }
.vp-body .combo { flex: 1; }
.vp-body select { padding-left: 1px; }

/* Scroll bars */
.vscroll { display: flex; flex-direction: column; align-items: center; background: linear-gradient(90deg, #f2f1ea, #fefefb); border-right: 2px solid var(--face); }
.hscroll { display: flex; align-items: center; background: linear-gradient(#f2f1ea, #fefefb); }
.vscroll button, .hscroll button, .log-scroll button, .thumb {
  width: 14px;
  height: 14px;
  border: 1px solid #b4c8f4;
  border-radius: 2px;
  background: linear-gradient(135deg, #dbe5fe, #b9cdfb);
  color: #3f5c8e;
}
.vscroll svg, .hscroll svg, .log-scroll svg { width: 10px; height: 10px; }
.hscroll .thumb { background: repeating-linear-gradient(90deg, #c6d6fc 0 2px, #93aeea 2px 3px); }
.vscroll .thumb { height: 16px; background: repeating-linear-gradient(#c6d6fc 0 2px, #93aeea 2px 3px); }
.hscroll .thumb, .vscroll .thumb { border: 3px solid #c6d6fc; outline: 1px solid #b0c4f0; outline-offset: -1px; }
.vscroll .space-a { flex: 86; }
.vscroll .space-b { flex: 356; }

/* Layout tabs */
.tabs { display: flex; align-items: flex-start; background: var(--face); }
.tab-nav { display: flex; }
.tab-nav button { width: 17px; height: 15px; border-right: 1px solid #d0cdbd; background: #f3f1e8; }
.tab-nav svg { width: 9px; height: 9px; }
.slant { width: 6px; height: 15px; }
.tab-nav + .slant { margin-left: 2px; }
.tab { height: 15px; padding: 0 2px; border-top: 1px solid #000; border-bottom: 1px solid #000; background: #f3f1e8; }
.tab.active { background: #000; color: #fff; }
.tabs .hscroll { width: 290px; height: 15px; margin-left: auto; }
.tabs .space-a { flex: 168; }
.tabs .space-b { flex: 78; }

/* Command window */
.command {
  display: flex;
  padding: 4px 7px 2px 5px;
  border-top: 1px solid #333;
  background: var(--face);
  box-shadow: inset 0 1px #fff;
  font: 12px/12px "Liberation Mono", monospace;
}
.console { flex: 1; border: solid #444; border-width: 2px 0 0 1px; }
.command .grip { margin: 3px 4px 3px 1px; }
.history { display: flex; background: #fff; border-bottom: 1px solid #999; }
.log { flex: 1; padding-top: 1px; }
.log-scroll { display: flex; flex-direction: column; justify-content: space-between; }
.prompt { display: flex; align-items: center; gap: 12px; height: 16px; background: #fff; }
.prompt input { flex: 1; min-width: 0; }
.small { width: 80px; height: 16px; padding: 0 18px 0 3px; gap: 1px; background: var(--face); }
.small .space-b { flex: 1; align-self: stretch; background: #fbfaf6; }

/* Status bar */
.statusbar {
  display: flex;
  align-items: center;
  gap: 3px;
  height: 20px;
  padding: 1px 2px 0 5px;
  border-top: 1px solid var(--shade);
  background: var(--face);
  font: 11px/14px Roboto, "Liberation Sans", sans-serif;
}
.coords { width: 223px; height: 16px; padding-left: 1px; border: 1px solid; border-color: var(--shade) #fff #fff var(--shade); }
.statusbar > button { height: 16px; padding: 0 2px; border: 1px solid; border-color: #fff var(--shade) var(--shade) #fff; }
.statusbar > .on { border-color: #444 #fff #fff #444; }
.status-tray { margin-left: auto; border: 1px solid; border-color: var(--shade) #fff #fff var(--shade); padding: 0 2px; }
.statusbar > .drop { border: 0; }

/* Task bar */
.taskbar {
  display: flex;
  align-items: center;
  height: 28px;
  background: linear-gradient(#3a80f0, #2560dc 4px, #245bd8 22px, #1c48b0);
  color: #fff;
}
.start {
  gap: 5px;
  width: 96px;
  height: 28px;
  padding-right: 12px;
  border-radius: 0 9px 9px 0;
  background: linear-gradient(#62b062, #3a953a 5px, #379037 22px, #2a702a);
  font: italic bold 15px/20px "Open Sans", sans-serif;
  text-shadow: 1px 1px 1px #1c4f1c;
}
.quick { display: flex; gap: 6px; width: 166px; padding-left: 11px; }
.task {
  justify-content: flex-start;
  gap: 4px;
  width: 150px;
  height: 24px;
  margin-right: 1px;
  padding-left: 9px;
  border-radius: 2px;
  background: linear-gradient(#5a9bf8, #3c80f2 5px, #3478ec);
  white-space: nowrap;
}
.task svg { width: 15px; height: 15px; }
.task.current { background: #1c4cae; }
.tray { display: flex; align-items: center; gap: 2px; height: 28px; margin-left: auto; padding: 0 13px 0 12px; background: linear-gradient(#2aa6f6, #128fe8 5px, #1090ea 22px, #0c70c0); }
.tray svg { width: 15px; height: 15px; }
.tray time { margin-left: 6px; }

/* Slide annotations */
.highlight { position: absolute; left: 297px; bottom: 41px; width: 186px; height: 46px; }
.caption {
  position: absolute;
  left: 459px;
  bottom: 0;
  width: 417px;
  padding: 6px 60px 6px 8px;
  border: 1px solid #000;
  background: #fff;
  font: bold 21px/25px "Liberation Serif", serif;
  color: #000;
}
```
